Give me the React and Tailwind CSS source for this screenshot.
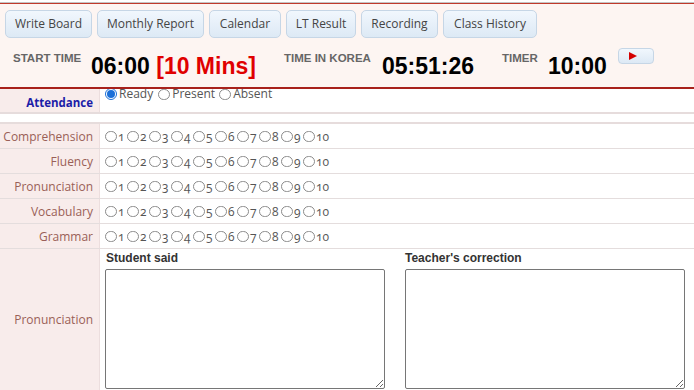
import React from 'react';

const tabs = [
  { name: 'Write Board', w: 'w-[87px]' },
  { name: 'Monthly Report', w: 'w-[107px]' },
  { name: 'Calendar', w: 'w-[72px]' },
  { name: 'LT Result', w: 'w-[70px]' },
  { name: 'Recording', w: 'w-[77px]' },
  { name: 'Class History', w: 'w-[94px]' },
];

const scores = ['Comprehension', 'Fluency', 'Pronunciation', 'Vocabulary', 'Grammar'];

function Circle({ checked }) {
  if (checked) {
    return (
      <span className="inline-flex w-[12px] h-[12px] rounded-full border border-[#1a6fd8] bg-white items-center justify-center">
        <span className="w-[8px] h-[8px] rounded-full bg-[#1a6fd8]" />
      </span>
    );
  }
  return <span className="inline-block w-[12px] h-[11px] rounded-full border border-[#8a8a8a] bg-white" />;
}

function ScoreRow({ label }) {
  const nums = [1, 2, 3, 4, 5, 6, 7, 8, 9, 10];
  return (
    <div className="flex h-[25px] border-b border-[#e4dddd]">
      <div className="w-[100px] shrink-0 bg-[#f8eceb] border-r border-[#ecdede] text-right pr-[6px] text-[12px] leading-[25px] text-[#9a5f57]">
        {label}
      </div>
      <div className="flex items-center pl-[5px] pt-[1px] text-[12px] text-[#555] oldstyle-nums">
        {nums.map((n) => (
          <span key={n} className={n < 10 ? 'inline-flex items-center w-[22px]' : 'inline-flex items-center'}>
            <Circle />
            <span className="ml-[1px]">{n}</span>
          </span>
        ))}
      </div>
    </div>
  );
}

export default function App() {
  return (
    <div className="w-[694px] h-[390px] overflow-hidden bg-white font-['Open_Sans',sans-serif]">
      <div className="h-[2px] bg-white" />
      <div className="h-[1px] bg-[#c4c4c4]" />
      <div className="relative z-10 bg-[#fdf5f2] border-t border-[#c0392b] border-b-[2px] border-b-[#a8211b] h-[86px]">
        <div className="flex gap-[5px] pl-[5px] pt-[6px]">
          {tabs.map((t) => (
            <button
              key={t.name}
              className={`${t.w} h-[28px] rounded-[5px] border border-[#c6d6e6] bg-gradient-to-b from-[#f1f7fd] to-[#dde9f5] text-[12px] text-[#444]`}
            >
              {t.name}
            </button>
          ))}
        </div>
        <div className="flex items-start pt-[9px] font-['Liberation_Sans',Arial,sans-serif]">
          <span className="w-[78px] ml-[13px] text-[11.5px] font-bold text-[#666] pt-[3px]">START TIME</span>
          <span className="w-[193px] text-[23px] font-bold leading-[28px] text-black pt-[5px]">
            06:00 <span className="text-[#e00000]">[10 Mins]</span>
          </span>
          <span className="w-[98px] text-[11.5px] font-bold text-[#666] pt-[3px]">TIME IN KOREA</span>
          <span className="w-[120px] text-[23px] font-bold leading-[28px] text-black pt-[5px]">05:51:26</span>
          <span className="w-[46px] text-[11.5px] font-bold text-[#666] pt-[3px]">TIMER</span>
          <span className="w-[70px] text-[23px] font-bold leading-[28px] text-black pt-[5px]">10:00</span>
          <button className="w-[36px] h-[16px] mt-[1px] rounded-[4px] border border-[#c6d6e6] bg-gradient-to-b from-[#f1f7fd] to-[#dde9f5] flex items-center justify-center">
            <svg width="8" height="8" viewBox="0 0 8 8" className="-ml-[6px]">
              <polygon points="0,0 8,4 0,8" fill="#d40000" />
            </svg>
          </button>
        </div>
      </div>

      <div className="-mt-[9px]">
        <div className="flex h-[34px] border-b-[2px] border-[#e6dcdc]">
          <div className="w-[100px] shrink-0 bg-[#f8eceb] border-r border-[#ecdede] flex items-end justify-end pr-[6px] pb-[1px]">
            <span className="text-[11.5px] font-bold text-[#1c1ca8] leading-[16px]">Attendance</span>
          </div>
          <div className="flex items-center pl-[5px] text-[12px] text-[#555] pb-[4px]">
            <Circle checked />
            <span className="ml-[2px] mr-[5px]">Ready</span>
            <Circle />
            <span className="ml-[2px] mr-[4px]">Present</span>
            <Circle />
            <span className="ml-[2px]">Absent</span>
          </div>
        </div>
        <div className="h-[10px] border-b-[2px] border-[#e6dcdc]" />
        {scores.map((s) => (
          <ScoreRow key={s} label={s} />
        ))}
        <div className="flex h-[142px]">
          <div className="w-[100px] shrink-0 bg-[#f8eceb] border-r border-[#ecdede] flex items-center justify-end pr-[6px] text-[12px] text-[#9a5f57]">
            Pronunciation
          </div>
          <div className="flex gap-[20px] pl-[5px] pt-[2px]">
            <div className="flex flex-col">
              <span className="font-['Liberation_Sans',Arial,sans-serif] font-bold text-[12px] text-[#333] leading-[14px] pl-[1px]">Student said</span>
              <textarea className="mt-[4px] w-[280px] h-[120px] border border-[#767676] rounded-[2px] bg-white" />
            </div>
            <div className="flex flex-col">
              <span className="font-['Liberation_Sans',Arial,sans-serif] font-bold text-[12px] text-[#333] leading-[14px]">Teacher's correction</span>
              <textarea className="mt-[4px] w-[280px] h-[120px] border border-[#767676] rounded-[2px] bg-white" />
            </div>
          </div>
        </div>
      </div>
    </div>
  );
}
